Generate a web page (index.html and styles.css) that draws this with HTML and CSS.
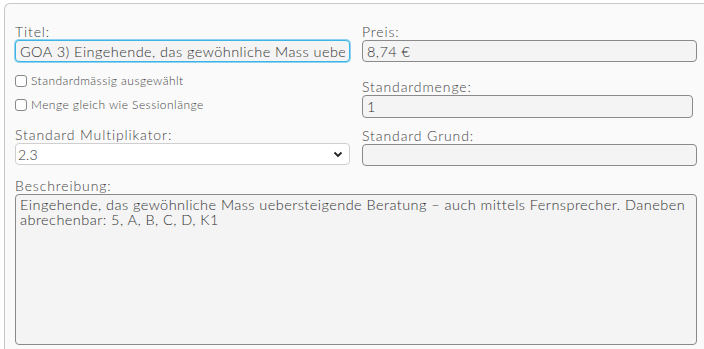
FILE: index.html
```html
<!DOCTYPE html>
<html lang="de">
  <head>
    <meta charset="UTF-8" />
    <meta name="viewport" content="width=device-width, initial-scale=1.0" />
    <title>Leistung bearbeiten</title>
    <link rel="stylesheet" href="styles.css">
  </head>
  <body>
    <div class="panel">
      <div class="columns">
        <!-- linke Spalte -->
        <div class="col">
          <div class="field">
            <label class="label">Titel:</label>
            <input class="input focused" type="text" value="GOA 3) Eingehende, das gewöhnliche Mass uebersteigende Beratung" />
          </div>
          <label class="check first"><span class="box"></span>Standardmässig ausgewählt</label>
          <label class="check"><span class="box"></span>Menge gleich wie Sessionlänge</label>
          <div class="field third">
            <label class="label">Standard Multiplikator:</label>
            <div class="select">
              <span>2.3</span>
              <svg width="10" height="7" viewBox="0 0 10 7"><path d="M1.5 1.5 L5 5 L8.5 1.5" fill="none" stroke="#222" stroke-width="1.8" /></svg>
            </div>
          </div>
        </div>

        <!-- rechte Spalte -->
        <div class="col">
          <div class="field">
            <label class="label">Preis:</label>
            <input class="input" type="text" value="8,74 €" />
          </div>
          <div class="field second">
            <label class="label">Standardmenge:</label>
            <input class="input short" type="text" value="1" />
          </div>
          <div class="field third-r">
            <label class="label">Standard Grund:</label>
            <input class="input" type="text" value="" />
          </div>
        </div>
      </div>

      <div class="field desc">
        <label class="label">Beschreibung:</label>
        <textarea class="input area">Eingehende, das gewöhnliche Mass uebersteigende Beratung – auch mittels Fernsprecher. Daneben abrechenbar: 5, A, B, C, D, K1</textarea>
      </div>
    </div>
  </body>
</html>
```

FILE: styles.css
```css
body {
  margin: 0;
  padding: 3px 0 0 4px;
  background: white;
  overflow: hidden;
  height: 100vh;
  box-sizing: border-box;
  font-family: "Lato", "Noto Sans", sans-serif;
  font-weight: 300;
  color: #333;
}

.panel {
  box-sizing: border-box;
  border: 1px solid #c8c8c8;
  border-right: none;
  border-bottom: none;
  border-radius: 6px 0 0 0;
  background: #fafafa;
  padding: 20px 7px 0 10px;
  height: 100%;
  overflow: hidden;
}

.columns {
  display: grid;
  grid-template-columns: 335px 335px;
  column-gap: 12px;
}

.col {
  display: flex;
  flex-direction: column;
}

.field {
  display: flex;
  flex-direction: column;
}

.label {
  font-size: 14px;
  line-height: 16px;
  letter-spacing: 0.9px;
  color: #444;
}

.input {
  box-sizing: border-box;
  width: 100%;
  height: 22px;
  margin: 0;
  padding: 0 4px;
  border: 1px solid #8a8a8a;
  border-radius: 4px;
  background: #f4f4f4;
  font-family: inherit;
  font-weight: 300;
  font-size: 14.5px;
  letter-spacing: 0.45px;
  color: #333;
  outline: none;
}

.input.focused {
  border-color: #3db4e6;
  box-shadow: 0 0 0 1px #8fd3f0;
}

.input.short {
  width: 331px;
  height: 23px;
}

.check {
  display: flex;
  align-items: center;
  gap: 4px;
  font-size: 12px;
  line-height: 14px;
  letter-spacing: 0.45px;
  color: #444;
}

.check.first {
  margin-top: 12px;
}

.check + .check {
  margin-top: 10px;
}

.box {
  width: 10px;
  height: 10px;
  border: 1px solid #888;
  border-radius: 3px;
  background: white;
}

.third {
  margin-top: 15px;
}

.second {
  margin-top: 17px;
}

.third-r {
  margin-top: 10px;
}

.select {
  box-sizing: border-box;
  height: 22px;
  display: flex;
  align-items: center;
  justify-content: space-between;
  padding: 0 6px 0 2px;
  border: 1px solid #cfcfcf;
  border-radius: 4px;
  background: white;
  font-size: 14px;
}

.desc {
  margin-top: 12px;
}

.area {
  height: 151px;
  padding: 2px 4px;
  resize: none;
  line-height: 15px;
  width: 682px;
}
```
